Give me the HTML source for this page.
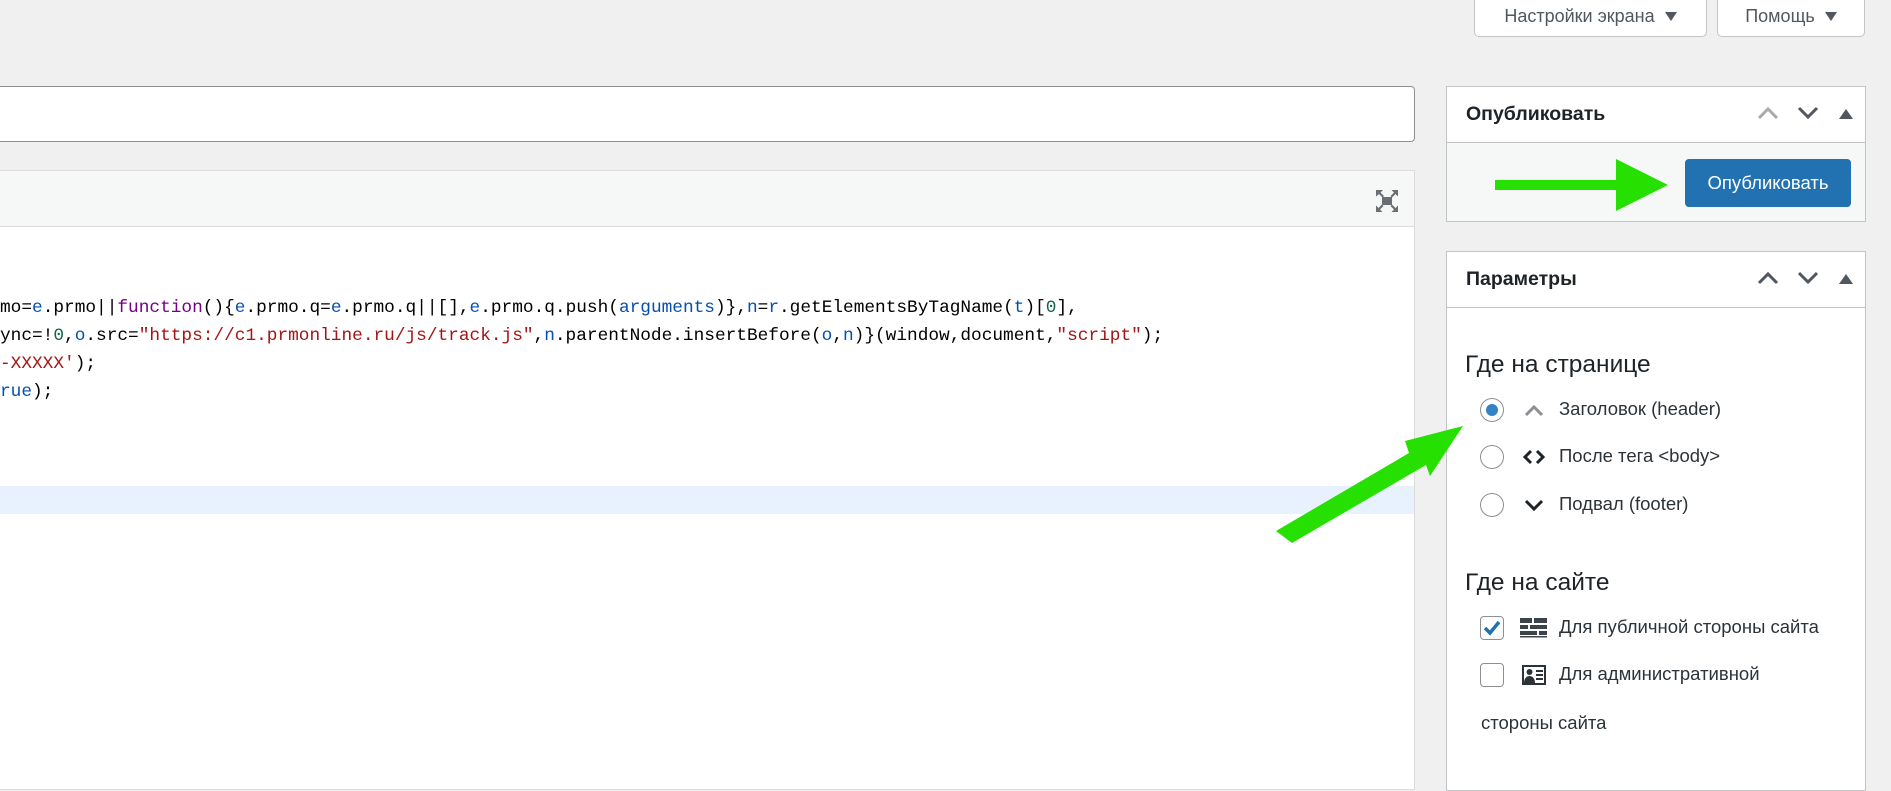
<!DOCTYPE html>
<html><head><meta charset="utf-8"><style>
*{margin:0;padding:0;box-sizing:border-box}
body{width:1891px;height:774px;background:#f0f0f1;position:relative;overflow:hidden;font-family:"Liberation Sans","DejaVu Sans",sans-serif;color:#1d2327}
.abs{position:absolute}
.tbtn{position:absolute;top:-4px;height:41px;background:#fff;border:1px solid #c3c4c7;border-radius:0 0 5px 5px;font-size:18px;color:#50575e;display:flex;align-items:center;justify-content:center;gap:10px}
.tri{display:inline-block;width:0;height:0;border-left:6px solid transparent;border-right:6px solid transparent;border-top:9px solid #50575e}
.box{position:absolute;left:1446px;width:420px;background:#fff;border:1px solid #c3c4c7}
.hdr{height:56px;border-bottom:1px solid #c3c4c7;display:flex;align-items:center;padding-left:19px;font-size:19.5px;font-weight:bold;position:relative}
.hi{position:absolute;top:18px}
.code{position:absolute;left:0;top:294px;font-family:"Liberation Mono",monospace;font-size:17.8px;line-height:28px;white-space:pre;color:#000}
.v{color:#0550ae}.k{color:#770088}.s{color:#a31515}.n{color:#116644}.a{color:#0550ae}
.radio{position:absolute;left:1480px;width:24px;height:24px;border:1px solid #8c8f94;border-radius:50%;background:#fff}
.cb{position:absolute;left:1480px;width:24px;height:24px;border:1px solid #8c8f94;border-radius:4px;background:#fff}
.lbl{position:absolute;left:1559px;font-size:18.5px;color:#2c3338}
.h2{position:absolute;left:1465px;font-size:24.5px;color:#1d2327}
</style></head><body>
<div class="tbtn" style="left:1474px;width:233px">Настройки экрана <span class="tri"></span></div>
<div class="tbtn" style="left:1717px;width:148px">Помощь <span class="tri"></span></div>

<div class="abs" style="left:-5px;top:86px;width:1420px;height:56px;background:#fff;border:1px solid #8c8f94;border-radius:4px"></div>

<div class="abs" style="left:-2px;top:170px;width:1417px;height:620px;background:#fff;border:1px solid #dcdcde"></div>
<div class="abs" style="left:-2px;top:170px;width:1417px;height:57px;background:#f6f7f7;border:1px solid #dcdcde"></div>
<svg class="abs" style="left:1374px;top:188px" width="26" height="26" viewBox="0 0 26 26" fill="#6b6e72"><rect x="8" y="9" width="10" height="8"/><path d="M2 2h7l-2.5 2.5 3.5 3.5-1.5 1.5-3.5-3.5L2 8.5zM24 2v6.5l-2.5-2.5-3.5 3.5-1.5-1.5 3.5-3.5L17.5 2zM2 24v-6.5l2.5 2.5 3.5-3.5 1.5 1.5-3.5 3.5L8.5 24zM24 24h-6.5l2.5-2.5-3.5-3.5 1.5-1.5 3.5 3.5L24 17.5z"/></svg>
<div class="abs" style="left:0;top:486px;width:1414px;height:28px;background:#e8f2fe"></div>

<div class="code">mo=<span class="v">e</span>.prmo||<span class="k">function</span>(){<span class="v">e</span>.prmo.q=<span class="v">e</span>.prmo.q||[],<span class="v">e</span>.prmo.q.push(<span class="a">arguments</span>)},<span class="v">n</span>=<span class="v">r</span>.getElementsByTagName(<span class="v">t</span>)[<span class="n">0</span>],
ync=!<span class="n">0</span>,<span class="v">o</span>.src=<span class="s">"https://c1.prmonline.ru/js/track.js"</span>,<span class="v">n</span>.parentNode.insertBefore(<span class="v">o</span>,<span class="v">n</span>)}(window,document,<span class="s">"script"</span>);
<span class="s">-XXXXX'</span>);
<span class="a">rue</span>);</div>

<div class="box" style="top:86px;height:136px">
  <div class="hdr">Опубликовать
    <svg class="hi" style="left:310px" width="22" height="16" viewBox="0 0 22 16"><path d="M2 13l9-9 9 9" stroke="#a7aaad" stroke-width="3" fill="none"/></svg>
    <svg class="hi" style="left:350px" width="22" height="16" viewBox="0 0 22 16"><path d="M2 3l9 9 9-9" stroke="#50575e" stroke-width="3" fill="none"/></svg>
    <svg class="hi" style="left:392px;top:22px" width="14" height="10"><path d="M7 0l7 10H0z" fill="#50575e"/></svg>
  </div>
  <div style="background:#f6f7f7;height:78px;position:relative">
    <div class="abs" style="left:238px;top:16px;width:166px;height:48px;background:#2271b1;border-radius:4px;color:#fff;font-size:18.5px;display:flex;align-items:center;justify-content:center">Опубликовать</div>
  </div>
</div>
<svg class="abs" style="left:0;top:0" width="1891" height="774"><path d="M1495 180h121v-21l52 26-52 26v-21h-121z" fill="#25e000"/></svg>

<div class="box" style="top:251px;height:540px">
  <div class="hdr">Параметры
    <svg class="hi" style="left:310px" width="22" height="16" viewBox="0 0 22 16"><path d="M2 13l9-9 9 9" stroke="#50575e" stroke-width="3" fill="none"/></svg>
    <svg class="hi" style="left:350px" width="22" height="16" viewBox="0 0 22 16"><path d="M2 3l9 9 9-9" stroke="#50575e" stroke-width="3" fill="none"/></svg>
    <svg class="hi" style="left:392px;top:22px" width="14" height="10"><path d="M7 0l7 10H0z" fill="#50575e"/></svg>
  </div>
</div>
<svg class="abs" style="left:0;top:0" width="1891" height="774"><path d="M1276 531l133-78-4-12 58-15-33 50-4-11-134 78z" fill="#25e000"/></svg>

<div class="h2" style="top:351px">Где на странице</div>
<div class="radio" style="top:398px"><div style="position:absolute;left:5px;top:5px;width:12px;height:12px;border-radius:50%;background:#3582c4"></div></div>
<svg class="abs" style="left:1524px;top:403px" width="20" height="14"><path d="M2 12l8-8 8 8" stroke="#8c8f94" stroke-width="3" fill="none"/></svg>
<div class="lbl" style="top:398px">Заголовок (header)</div>
<div class="radio" style="top:445px"></div>
<svg class="abs" style="left:1522px;top:448px" width="24" height="18"><path d="M9 3L3 9l6 6M15 3l6 6-6 6" stroke="#1d2327" stroke-width="3" fill="none"/></svg>
<div class="lbl" style="top:445px">После тега &lt;body&gt;</div>
<div class="radio" style="top:493px"></div>
<svg class="abs" style="left:1524px;top:498px" width="20" height="14"><path d="M2 3l8 8 8-8" stroke="#1d2327" stroke-width="3" fill="none"/></svg>
<div class="lbl" style="top:493px">Подвал (footer)</div>

<div class="h2" style="top:569px">Где на сайте</div>
<div class="cb" style="top:616px"><svg width="22" height="22" viewBox="0 0 22 22"><path d="M4 11l5 5 9-11" stroke="#2271b1" stroke-width="3.5" fill="none"/></svg></div>
<svg class="abs" style="left:1520px;top:618px" width="28" height="20" fill="#3c434a"><rect x="0" y="0" width="12" height="5"/><rect x="14" y="0" width="13" height="5"/><rect x="0" y="7" width="8" height="4"/><rect x="10" y="7" width="17" height="4"/><rect x="0" y="13" width="17" height="4"/><rect x="19" y="13" width="8" height="4"/><rect x="0" y="18" width="27" height="1.5"/></svg>
<div class="lbl" style="top:616px">Для публичной стороны сайта</div>
<div class="cb" style="top:663px"></div>
<svg class="abs" style="left:1522px;top:665px" width="24" height="21"><rect x="1" y="1" width="22" height="18" fill="#fff" stroke="#2c3338" stroke-width="2"/><circle cx="7.5" cy="7" r="3" fill="#2c3338"/><path d="M2 18c0-5 3-7 5.5-7s5.5 2 5.5 7z" fill="#2c3338"/><rect x="14" y="5" width="7" height="2" fill="#2c3338"/><rect x="14" y="9" width="7" height="2" fill="#2c3338"/><rect x="14" y="13" width="7" height="2" fill="#2c3338"/></svg>
<div class="lbl" style="top:663px">Для административной</div>
<div class="lbl" style="left:1481px;top:712px">стороны сайта</div>
</body></html>
